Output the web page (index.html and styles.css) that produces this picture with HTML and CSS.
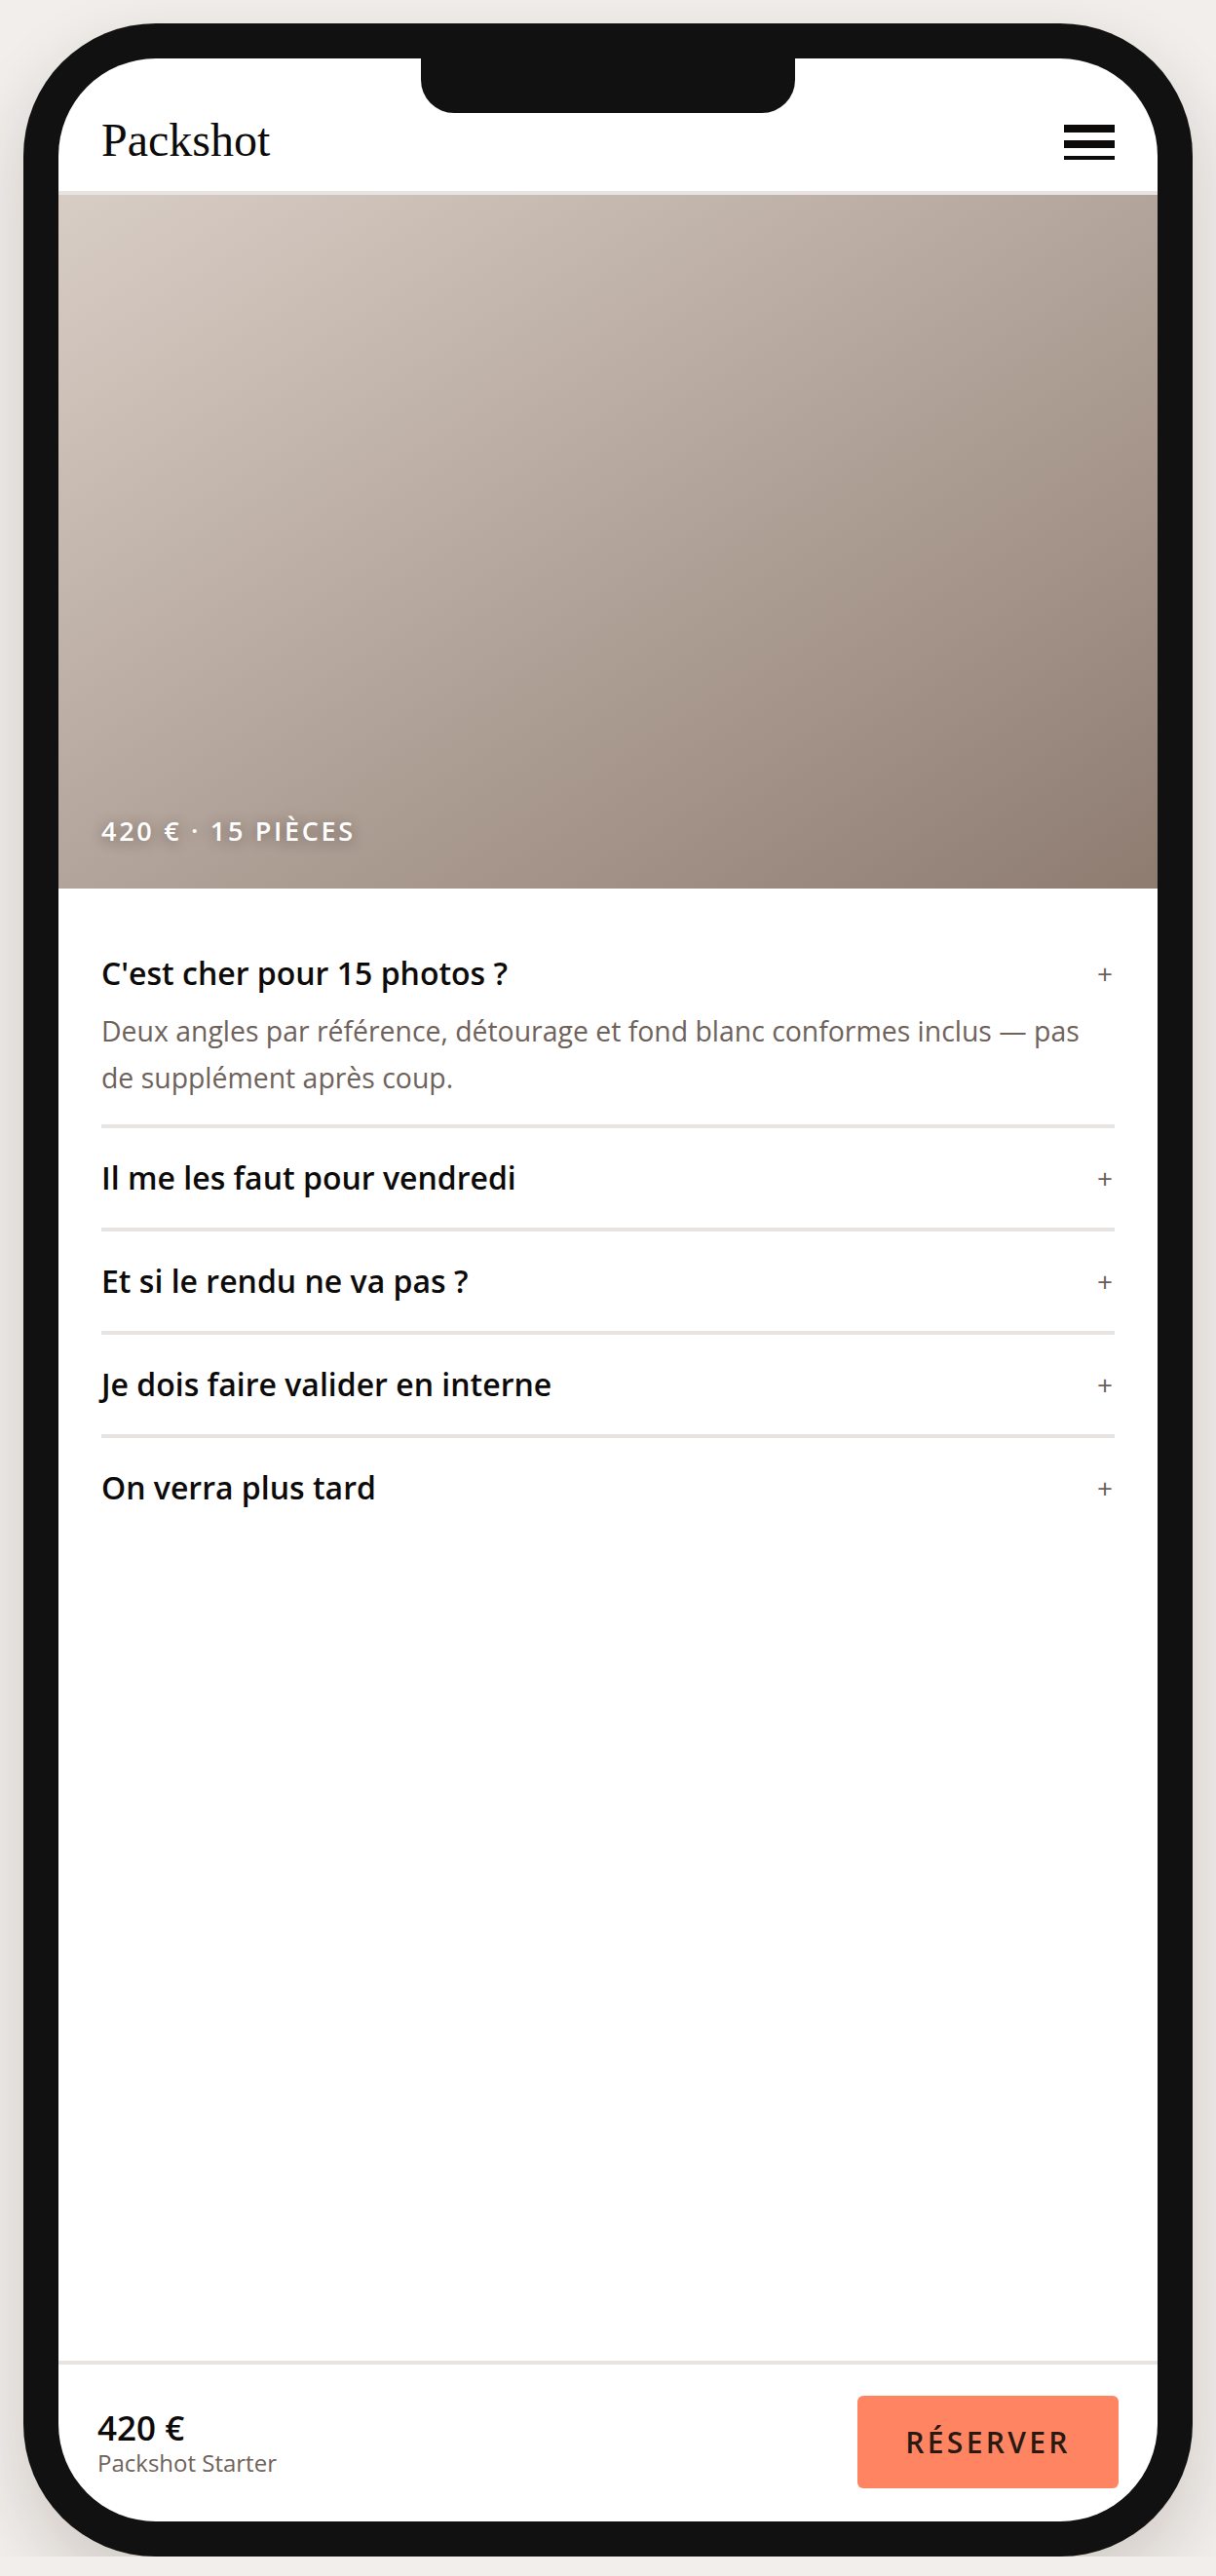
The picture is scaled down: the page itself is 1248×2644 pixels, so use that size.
FILE: index.html
```html
<!DOCTYPE html>
<html lang="fr">
<head>
    <meta charset="UTF-8">
    <meta name="viewport" content="width=device-width, initial-scale=1.0">
    <title>Packshot</title>
    <link rel="stylesheet" href="styles.css">
</head>
<body>
    <div class="phone">
        <div class="screen">
            <div class="notch"></div>

            <header class="header">
                <div class="logo">Packshot</div>
                <button class="menu" type="button" aria-label="Menu">
                    <svg width="52" height="36" viewBox="0 0 52 36">
                        <rect x="0" y="0" width="52" height="8" fill="#0d0b0a"/>
                        <rect x="0" y="16" width="52" height="8" fill="#0d0b0a"/>
                        <rect x="0" y="32" width="52" height="4" fill="#0d0b0a"/>
                    </svg>
                </button>
            </header>

            <div class="hero">
                <div class="hero-caption">420 € · 15 pièces</div>
            </div>

            <div class="faq">
                <div class="faq-item open">
                    <div class="faq-q"><span>C'est cher pour 15 photos ?</span><span class="plus">+</span></div>
                    <p class="faq-a">Deux angles par référence, détourage et fond blanc conformes inclus — pas de supplément après coup.</p>
                </div>
                <div class="faq-item">
                    <div class="faq-q"><span>Il me les faut pour vendredi</span><span class="plus">+</span></div>
                </div>
                <div class="faq-item">
                    <div class="faq-q"><span>Et si le rendu ne va pas ?</span><span class="plus">+</span></div>
                </div>
                <div class="faq-item">
                    <div class="faq-q"><span>Je dois faire valider en interne</span><span class="plus">+</span></div>
                </div>
                <div class="faq-item">
                    <div class="faq-q"><span>On verra plus tard</span><span class="plus">+</span></div>
                </div>
            </div>

            <div class="bottom-bar">
                <div class="price">
                    <div class="price-amount">420 €</div>
                    <div class="price-name">Packshot Starter</div>
                </div>
                <button class="book" type="button">Réserver</button>
            </div>
        </div>
    </div>
</body>
</html>
```

FILE: styles.css
```css
body {
    margin: 0;
    background: #f1eeeb;
    font-family: "Open Sans", "Noto Sans", sans-serif;
    color: #0d0b0a;
}

.phone {
    box-sizing: border-box;
    width: 1200px;
    height: 2600px;
    margin: 24px auto 0;
    padding: 36px;
    background: #111;
    border-radius: 136px;
    box-shadow: 0 30px 70px rgba(60, 40, 30, 0.18);
}

.screen {
    position: relative;
    height: 100%;
    display: flex;
    flex-direction: column;
    background: #fff;
    border-radius: 100px;
    overflow: hidden;
}

.notch {
    position: absolute;
    top: 0;
    left: 372px;
    width: 384px;
    height: 56px;
    background: #111;
    border-radius: 0 0 34px 34px;
}

.header {
    height: 100px;
    padding: 36px 44px 0;
    display: flex;
    align-items: center;
    justify-content: space-between;
    border-bottom: 4px solid #e8e4e1;
}

.logo {
    font-family: "Liberation Serif", serif;
    font-size: 48px;
    line-height: 1;
    margin-top: -4px;
}

.menu {
    padding: 0;
    border: none;
    background: none;
    display: flex;
}

.hero {
    height: 712px;
    box-sizing: border-box;
    padding: 0 44px 41px;
    display: flex;
    align-items: flex-end;
    background: linear-gradient(to bottom right, #d8cdc5, #8e7c71);
}

.hero-caption {
    color: #fff;
    font-size: 27px;
    font-weight: 600;
    letter-spacing: 0.1em;
    text-transform: uppercase;
    text-shadow: 0 2px 14px rgba(40, 25, 15, 0.45);
}

.faq {
    flex: 1;
    padding: 36px 44px 0;
}

.faq-item {
    padding: 28px 0;
    border-bottom: 4px solid #e8e4e1;
}

.faq-item.open {
    padding-bottom: 24px;
}

.faq-item:last-child {
    border-bottom: none;
}

.faq-q {
    display: flex;
    justify-content: space-between;
    align-items: center;
    font-size: 32px;
    font-weight: 600;
    line-height: 46px;
}

.plus {
    font-size: 28px;
    font-weight: 400;
    color: #6b5f58;
    margin-right: 2px;
}

.faq-a {
    margin: 12px 0 0;
    padding-right: 16px;
    font-size: 28.4px;
    line-height: 48px;
    color: #6e625b;
}

.bottom-bar {
    border-top: 4px solid #e8e4e1;
    padding: 32px 40px 34px;
    display: flex;
    align-items: center;
    justify-content: space-between;
}

.price-amount {
    font-size: 35px;
    font-weight: 600;
    line-height: 42px;
}

.price-name {
    font-size: 24px;
    line-height: 30px;
    color: #6e625b;
}

.book {
    width: 268px;
    height: 95px;
    border: none;
    border-radius: 6px;
    background: #ff8562;
    color: #2a1913;
    font-family: "Open Sans", sans-serif;
    font-size: 30px;
    font-weight: 600;
    letter-spacing: 0.11em;
    text-transform: uppercase;
}
```
